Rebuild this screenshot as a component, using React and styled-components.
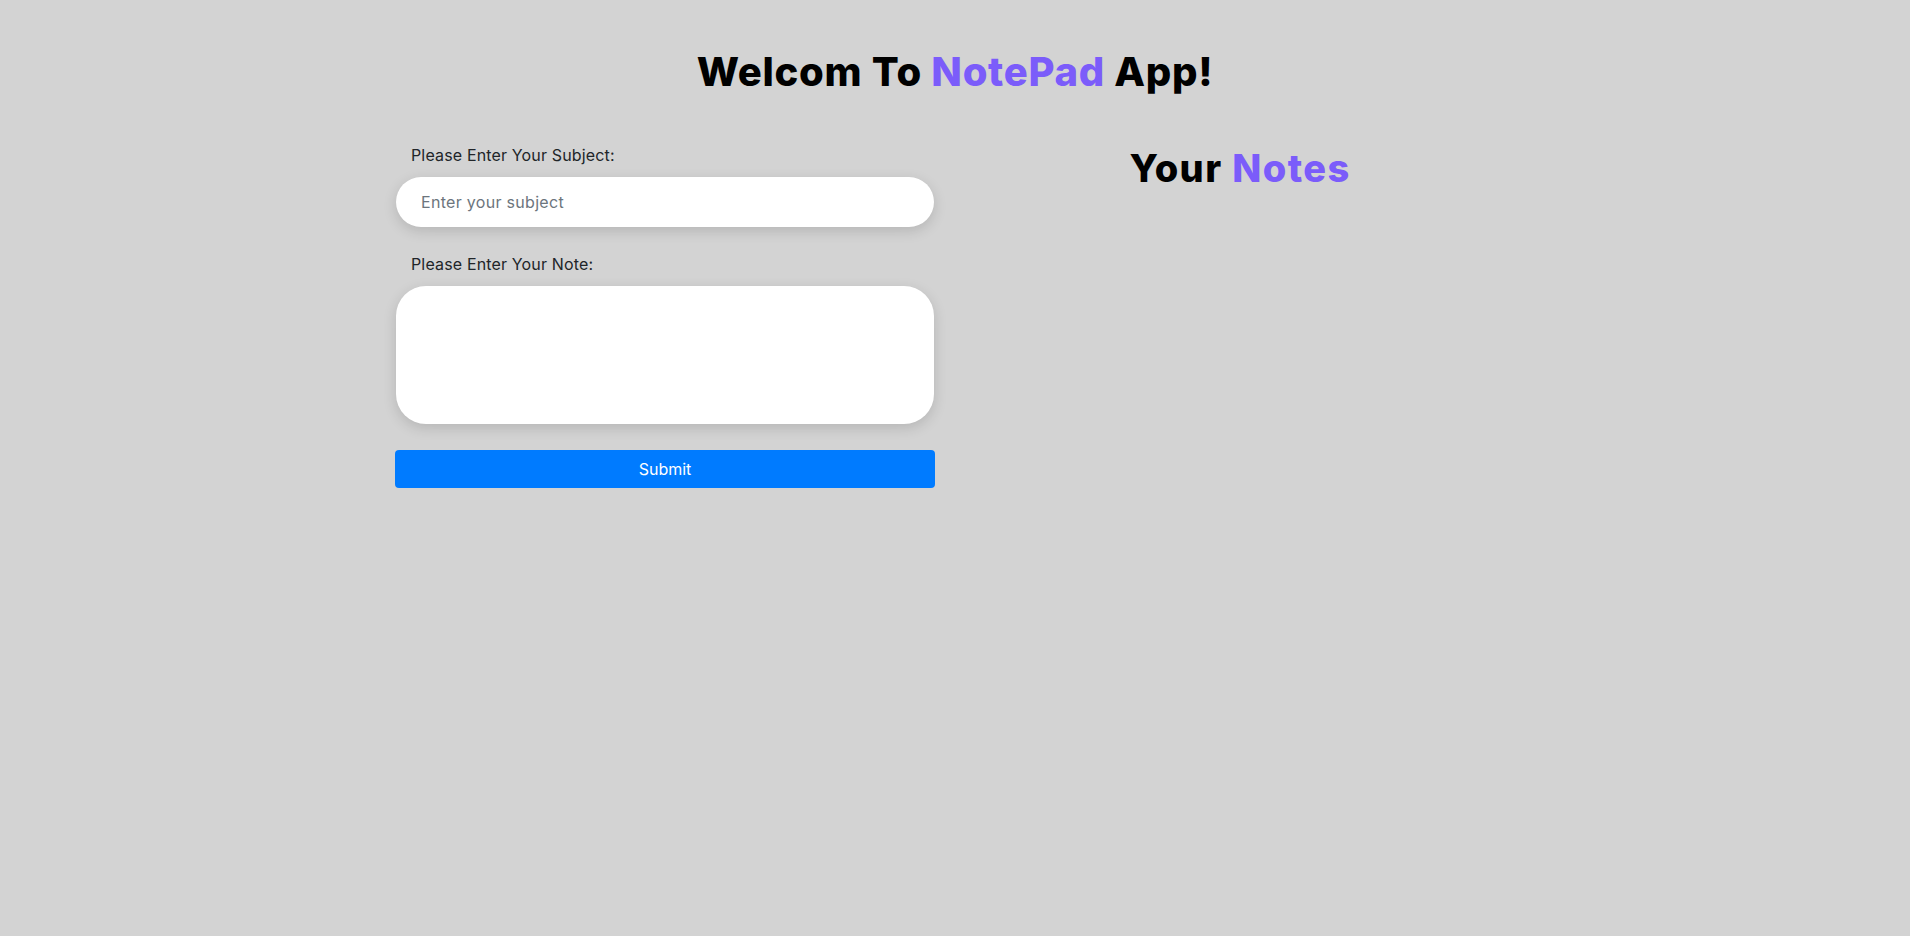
import React from 'react';
import styled, { createGlobalStyle } from 'styled-components';

const Global = createGlobalStyle`
  html, body { margin: 0; padding: 0; background: #d3d3d3; }
  body { font-family: Inter, "Noto Sans", sans-serif; color: #212529; }
  * { box-sizing: border-box; }
`;

const Page = styled.div`
  min-height: 936px;
  background: #d3d3d3;
  padding-top: 48px;
`;

const Title = styled.h1`
  margin: 0;
  font-size: 40px;
  line-height: 48px;
  font-weight: 800;
  letter-spacing: 0.7px;
  text-align: center;
  color: #000;
`;

const Accent = styled.span`
  color: #7b5cfa;
`;

const Row = styled.div`
  width: 1140px;
  margin: 47px auto 0;
  display: flex;
`;

const Column = styled.div`
  width: 570px;
  padding-left: ${p => p.$pad || 0}px;
  display: flex;
  flex-direction: column;
  align-items: ${p => (p.$center ? 'center' : 'flex-start')};
`;

const Label = styled.label`
  font-size: 16px;
  line-height: 24px;
  letter-spacing: 0.15px;
  margin: ${p => p.$top || 0}px 0 10px 15px;
  color: #212529;
`;

const Field = styled.input`
  width: 538px;
  height: 50px;
  border: none;
  outline: none;
  border-radius: 25px;
  background: #fff;
  padding: 0 25px;
  font-family: inherit;
  font-size: 16px;
  letter-spacing: 0.3px;
  color: #212529;
  box-shadow: 0 4px 14px rgba(0, 0, 0, 0.14);
  &::placeholder { color: #6c757d; }
`;

const Area = styled.textarea`
  width: 538px;
  height: 138px;
  border: none;
  outline: none;
  border-radius: 30px;
  background: #fff;
  padding: 16px 25px;
  font-family: inherit;
  font-size: 16px;
  resize: none;
  box-shadow: 0 4px 14px rgba(0, 0, 0, 0.14);
`;

const Button = styled.button`
  width: 540px;
  height: 38px;
  margin: 26px 0 0 -1px;
  border: none;
  border-radius: 4px;
  background: #007bff;
  color: #fff;
  font-family: inherit;
  font-size: 16px;
  cursor: pointer;
`;

const NotesTitle = styled.h2`
  margin: 2px 0 0;
  font-size: 38px;
  line-height: 46px;
  font-weight: 800;
  letter-spacing: 1.4px;
  color: #000;
`;

export default function App() {
  return (
    <>
      <Global />
      <Page>
        <Title>
          Welcom To <Accent>NotePad</Accent> App!
        </Title>
        <Row>
          <Column $pad={11}>
            <Label>Please Enter Your Subject:</Label>
            <Field placeholder="Enter your subject" />
            <Label $top={25}>Please Enter Your Note:</Label>
            <Area />
            <Button>Submit</Button>
          </Column>
          <Column $center>
            <NotesTitle>
              Your <Accent>Notes</Accent>
            </NotesTitle>
          </Column>
        </Row>
      </Page>
    </>
  );
}
